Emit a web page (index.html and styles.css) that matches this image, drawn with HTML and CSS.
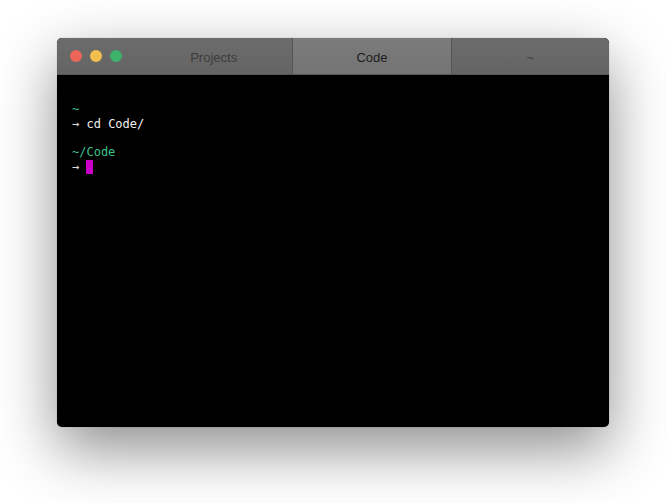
FILE: index.html
```html
<!DOCTYPE html>
<html lang="en">
<head>
    <meta charset="UTF-8">
    <title>Terminal</title>
    <link rel="stylesheet" href="styles.css">
</head>
<body>

    <div class="window">
        <div class="titlebar">
            <div class="lights">
                <span class="light red"></span>
                <span class="light yellow"></span>
                <span class="light green"></span>
            </div>
            <div class="tab">Projects</div>
            <div class="tab active">Code</div>
            <div class="tab">~</div>
        </div>

        <div class="screen">
            <div class="block">
                <div class="line path">~</div>
                <div class="line"><span class="arrow">→</span> cd Code/</div>
            </div>
            <div class="block">
                <div class="line path">~/Code</div>
                <div class="line"><span class="arrow">→</span> <span class="cursor"></span></div>
            </div>
        </div>
    </div>

</body>
</html>
```

FILE: styles.css
```css
html, body {
    height: 100%;
}

body {
    margin: 0;
    padding-top: 38px;
    box-sizing: border-box;
    background: #ffffff;
    font-family: "Liberation Sans", Arial, sans-serif;
}

.window {
    width: 552px;
    height: 389px;
    margin: 0 auto;
    border-radius: 5px;
    overflow: hidden;
    display: flex;
    flex-direction: column;
    background: #000000;
    box-shadow: 0 22px 60px rgba(0, 0, 0, 0.45), 0 0 1px rgba(0, 0, 0, 0.4);
}

.titlebar {
    height: 36px;
    display: flex;
    background: linear-gradient(#6c6c6c, #646464);
    border-bottom: 1px solid #555555;
}

.lights {
    width: 78px;
    display: flex;
    align-items: center;
    gap: 8px;
    padding-left: 13px;
    box-sizing: border-box;
}

.light {
    width: 12px;
    height: 12px;
    border-radius: 50%;
}

.red { background: #ec6559; }
.yellow { background: #f3be4b; }
.green { background: #3db26a; }

.tab {
    flex: 1;
    display: flex;
    align-items: center;
    justify-content: center;
    padding-top: 2px;
    font-size: 13px;
    color: #3c3c3c;
    border-left: 1px solid #555555;
}

.tab:nth-child(2) {
    border-left: none;
}

.tab.active {
    background: linear-gradient(#7b7b7b, #747474);
    color: #1c1c1c;
}

.screen {
    flex: 1;
    padding: 27px 15px 0;
    font-family: "DejaVu Sans Mono", monospace;
    font-size: 12px;
    color: #f2f2f2;
}

.block + .block {
    margin-top: 13px;
}

.line {
    height: 15px;
    line-height: 15px;
    white-space: pre;
}

.path {
    color: #3dc18e;
}

.arrow {
    color: #dddddd;
}

.cursor {
    display: inline-block;
    width: 7px;
    height: 14px;
    vertical-align: -3px;
    background: #c800c8;
}
```
